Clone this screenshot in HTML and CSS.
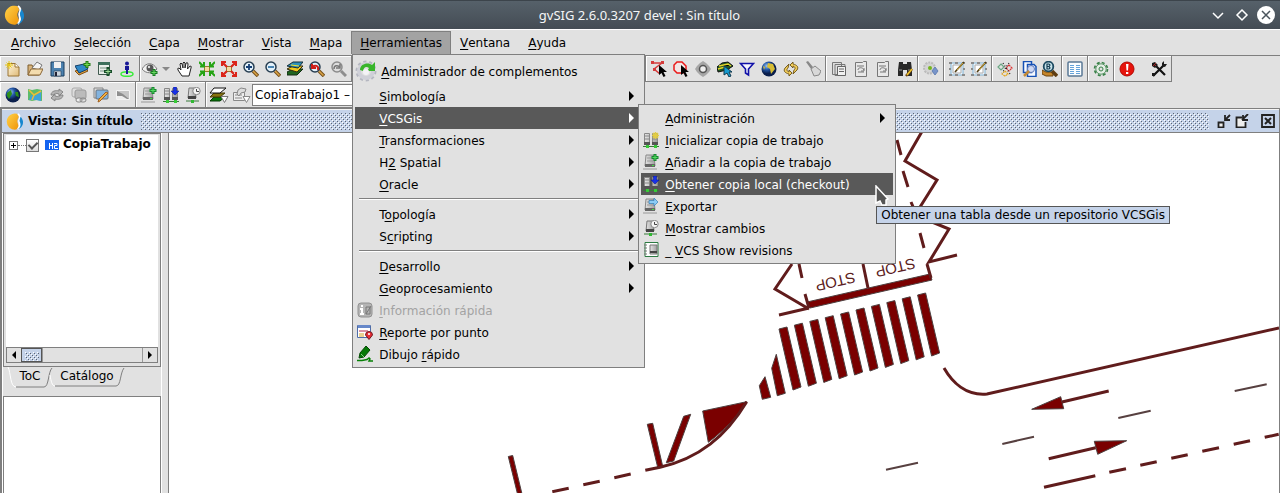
FILE: index.html
```html
<!DOCTYPE html>
<html lang="es">
<head>
<meta charset="utf-8">
<title>gvSIG 2.6.0.3207 devel : Sin título</title>
<link rel="stylesheet" href="styles.css">
</head>
<body>
<svg class="defs" aria-hidden="true">
  <defs>
    <pattern id="dots" width="4" height="4" patternUnits="userSpaceOnUse"><path d="M0 0h1v1H0zM2 2h1v1H2z" fill="#5b6472"/><path d="M1 1h1v1H1zM3 3h1v1H3z" fill="#fff"/></pattern>
    <linearGradient id="orange" x1="0" y1="0" x2="1" y2="1"><stop offset="0" stop-color="#ffd24a"/><stop offset="1" stop-color="#ee9408"/></linearGradient>
    <radialGradient id="globe" cx=".35" cy=".3"><stop offset="0" stop-color="#9ac4f0"/><stop offset=".5" stop-color="#2458a8"/><stop offset="1" stop-color="#0b1f4d"/></radialGradient>
    <linearGradient id="metal"><stop offset="0" stop-color="#e4e4e4"/><stop offset="1" stop-color="#a0a0a0"/></linearGradient>
    <linearGradient id="paper" x1="0" y1="0" x2="1" y2="1"><stop offset="0" stop-color="#fff6dc"/><stop offset="1" stop-color="#dfba78"/></linearGradient>
  </defs>
  <symbol id="logo" viewBox="0 0 20 20"><path d="M13 1a9.500 9.500 0 1 0-1 18.500c3-2 4-4 2-7-2-4 1-6 1-8 0-1-1-3-2-3.500z" fill="url(#orange)"/><path d="M14 1c3 2 3 4 1.500 7s3 6-1.500 11" fill="none" stroke="#fff" stroke-width="2"/><path d="M17 4c3 3 4 7 2 11-1 2-3 4-5 4 3-2 4-5 2.500-8S17 7 17 4z" fill="#1787cf"/></symbol>
  <symbol id="new" viewBox="0 0 16 16"><path d="M3 2.500h7l4 3.500v9H3z" fill="url(#paper)" stroke="#9a7535"/><path d="M10 2.500V6h4" fill="#fff" stroke="#9a7535"/><path d="M4 0v8M0 4h8M1.500 1.500l5 5M6.500 1.500l-5 5" stroke="#e8c711"/></symbol>
  <symbol id="open" viewBox="0 0 16 16"><path d="M1 14V4h4l1 2h6v8z" fill="#d8b47c" stroke="#7d5c2c"/><path d="M5 7l5-6 5 3-3 5z" fill="#f4f4f4" stroke="#777"/><path d="M1 14l3-6h12l-3 6z" fill="#f3dcae" stroke="#8a6635"/></symbol>
  <symbol id="save" viewBox="0 0 16 16"><path d="M2 1h13v14H2z" fill="#4c82b0" stroke="#1b3f60"/><path d="M5 1h7v6H5z" fill="#f1f1f1"/><path d="M5 10h7v5H5z" fill="#ccd6df" stroke="#253e55" stroke-width=".6"/><path d="M6 11h2v4H6z" fill="#223"/></symbol>
  <symbol id="addlayer" viewBox="0 0 16 16"><path d="M0 10l10-3 3 3-9 4z" fill="#e8a13c" stroke="#7f5014"/><path d="M0 5l9-2 4 5-9 4z" fill="#2f88c8" stroke="#123f68"/><path d="M12 0v7M8.500 3.500h7" stroke="#247c14" stroke-width="3"/><path d="M12 1v5M9.500 3.500h5" stroke="#78dc54"/></symbol>
  <symbol id="addtable" viewBox="0 0 16 16"><path d="M1.500 1.500h11v12h-11z" fill="#e8eee9" stroke="#405a4f"/><path d="M1 1h12v3H1z" fill="#3d6f5b"/><path d="M3 7h8M3 10h8" stroke="#769083"/><path d="M11 6v9M7 10.500h8" stroke="#174e2b" stroke-width="3"/><path d="M11 8v5M8.500 10.500h5" stroke="#9edb94"/></symbol>
  <symbol id="person" viewBox="0 0 16 16"><ellipse cx="8" cy="13" rx="6" ry="2.300" fill="none" stroke="#39ec39" stroke-width="1.500"/><circle cx="8" cy="2.500" r="2" fill="#171796"/><path d="M6 5h4v4H9v4H7V9H6z" fill="#171796"/></symbol>
  <symbol id="eye" viewBox="0 0 16 16"><path d="M0 8c4-7 11-7 15 0-4 5-11 5-15 0z" fill="#f2f2f2" stroke="#777"/><circle cx="8" cy="7" r="3.500" fill="#555"/><circle cx="7" cy="6" r="1.200" fill="#ddd"/><path d="M12 8v7M8.500 11.500h7" stroke="#187a22" stroke-width="3"/><path d="M12 9v5M9.500 11.500h5" stroke="#67da60"/></symbol>
  <symbol id="hand" viewBox="0 0 16 16"><path d="M5 15L1 9q-1-2 1-2l2 2-1-6q1-2 2 0l1 4V2q1-2 2 0v5l1-5q2-1 2 1l-.500 5L13 5q2 0 1 2l-2 8z" fill="#fff" stroke="#222"/></symbol>
  <symbol id="zoomin-ext" viewBox="0 0 16 16"><path d="M5.500 5.500h5v5h-5z" fill="#f6d9a0" stroke="#937a2f"/><path d="M0 1l4 4M16 1l-4 4M0 15l4-4M16 15l-4-4M1 5.500h4V1M15 5.500h-4V1M1 10.500h4V15M15 10.500h-4V15" stroke="#25a414" stroke-width="2" fill="none"/></symbol>
  <symbol id="zoomout-ext" viewBox="0 0 16 16"><path d="M5.500 5.500h5v5h-5z" fill="#f6d9a0" stroke="#937a2f"/><path d="M1 1l5 5M15 1l-5 5M1 15l5-5M15 15l-5-5M1 5V1h4M11 1h4v4M1 11v4h4M15 11v4h-4" stroke="#db2419" stroke-width="2.200" fill="none"/></symbol>
  <symbol id="lens" viewBox="0 0 16 16"><path d="M10 10l5 5" stroke="#744e18" stroke-width="3.500"/><path d="M10 10l4.500 4.500" stroke="#dda547" stroke-width="1.500"/><circle cx="6" cy="6" r="5" fill="#e3f1fa" stroke="#273e51" stroke-width="1.500"/></symbol>
  <symbol id="zoomin" viewBox="0 0 16 16"><use href="#lens"/><path d="M3 6h6M6 3v6" stroke="#153f76" stroke-width="1.800"/></symbol>
  <symbol id="zoomout" viewBox="0 0 16 16"><use href="#lens"/><path d="M3 6h6" stroke="#3878aa" stroke-width="1.800"/></symbol>
  <symbol id="layers" viewBox="0 0 16 16"><path d="M0 11l6-3h10l-6 6H0z" fill="#20641f" stroke="#132a13"/><path d="M0 8l6-3h10l-6 6z" fill="#f1c91d" stroke="#332c10"/><path d="M0 5l6-4h10l-5 6z" fill="#2d91ba" stroke="#152d36"/><path d="M4 4l8 1" stroke="#f1e22b"/></symbol>
  <symbol id="zoomprev" viewBox="0 0 16 16"><use href="#lens"/><path d="M9 9c1-5-3-5-6-3M3 3v4h4" fill="none" stroke="#cf1d17" stroke-width="2"/></symbol>
  <symbol id="zoomnext" viewBox="0 0 16 16"><path d="M10 10l5 5" stroke="#8e8e8e" stroke-width="3"/><circle cx="6" cy="6" r="5" fill="#ddd" stroke="#8b8b8b" stroke-width="1.500"/><path d="M3 8c0-4 3-4 6-2M9 3v4H5" fill="none" stroke="#777" stroke-width="1.500"/></symbol>
  <symbol id="cursor" viewBox="0 0 16 16"><path d="M8 4v10l2.500-2 2 4 2-1-2-4H16z" fill="#000"/></symbol>
  <symbol id="selpoly" viewBox="0 0 16 16"><path d="M1 2h11M11 2L3 8l6 5" fill="none" stroke="#d43b3b" stroke-width="1.500"/><path d="M0 0h3v3H0zM10 0h3v3h-3zM2 7h3v3H2z" fill="#d43b3b"/><use href="#cursor"/></symbol>
  <symbol id="selcirc" viewBox="0 0 16 16"><path d="M4 1h5l4 4v4l-3 3H4L1 9V4z" fill="#f2e5e5" stroke="#ea1818" stroke-width="1.500"/><use href="#cursor"/></symbol>
  <symbol id="buffer" viewBox="0 0 16 16"><path d="M8 0l3 2 3 3 2 3-2 3-3 3-3 2-3-2-3-3-2-3 2-3 3-3z" fill="#a6a6a6"/><circle cx="8" cy="8" r="3.500" fill="#eee" stroke="#555" stroke-width="1.500"/></symbol>
  <symbol id="sellayer" viewBox="0 0 16 16"><path d="M0 6l5-4 6-1 5 4-6 4-9 2z" fill="#1f5724" stroke="#111"/><path d="M2 5l9-2 3 2M1 8l7-2" stroke="#e4d52b" stroke-width="1.500"/><path d="M7 5v9l3-2 2 4 2-1-2-4h3z" fill="#159bd0" stroke="#12384d"/></symbol>
  <symbol id="filter" viewBox="0 0 16 16"><path d="M1.500 2.500h13L9.500 8v6L6.500 12V8z" fill="#f5f5ff" stroke="#1010a8" stroke-width="1.600"/></symbol>
  <symbol id="earth" viewBox="0 0 16 16"><circle cx="8" cy="8" r="7.500" fill="url(#globe)"/><path d="M7 2l5 1 2 5-4 5-1-5-3-2zM2 5l2 1-1 3z" fill="#d7bd35"/></symbol>
  <symbol id="earthg" viewBox="0 0 16 16"><circle cx="8" cy="8" r="7.500" fill="url(#globe)"/><path d="M2 6l4-3 1 4-3 5-2-3zM10 5l3 0 1 5-3-1z" fill="#2e8f1b"/></symbol>
  <symbol id="swap" viewBox="0 0 16 16"><path d="M6 3L2 7c-2 3 0 5 4 6v2l3-3-3-3v2c-2-1-3-2-1-4zM10 13l4-4c2-3 0-5-4-6V1L7 4l3 3V5c2 1 3 2 1 4z" fill="#f1cc5a" stroke="#6b5114" stroke-width=".9"/></symbol>
  <symbol id="broom" viewBox="0 0 16 16"><path d="M1 1l2-1 5 6-2 2z" fill="#888"/><path d="M6 8l4-3 6 5-2 4-5 1z" fill="#d8d8d8" stroke="#888"/></symbol>
  <symbol id="docs" viewBox="0 0 16 16"><path d="M1.500 1.500h9v12h-9zM4 3.500h10v11H4z" fill="#ddd" stroke="#777"/><path d="M6.500 5.500h8v9h-8zM8 8h5M8 10.500h5" fill="#f1f1f1" stroke="#666"/></symbol>
  <symbol id="doc" viewBox="0 0 16 16"><path d="M2.500 1.500h7l1-1h3v15h-11z" fill="#e8e8e8" stroke="#777"/><path d="M4 5h7M5 9c0-3 5-3 6 0M11 7v3H8M5 11h6" fill="none" stroke="#777"/></symbol>
  <symbol id="binoc" viewBox="0 0 16 16"><path d="M2 1h4v2h4V1h4l1 8v6h-5V9H6v6H1V9z" fill="#292929"/><path d="M2 9h3M11 9h3" stroke="#999"/><path d="M15 8l-6 7" stroke="#6a4212" stroke-width="2.500"/><path d="M15 8l-5 6" stroke="#f0c52c" stroke-width="1.500"/></symbol>
  <symbol id="geargray" viewBox="0 0 16 16"><circle cx="6.500" cy="7" r="5.500" fill="#d3d3d3" stroke="#bbb" stroke-width="2" stroke-dasharray="2 1"/><circle cx="7" cy="7" r="2" fill="#75b51f"/><path d="M12 6l3 4-3 4-3-4z" fill="#7894c9" stroke="#6682b5"/></symbol>
  <symbol id="editgeo" viewBox="0 0 16 16"><path d="M2 2h12v12H2z" fill="#eef5fb" stroke="#82b5d6"/><path d="M4 4h8v8H4z" fill="#fff" stroke="#aaa"/><path d="M0 1h3v2H0zM6 1h3v2H6zM13 1h3v2h-3zM0 13h3v2H0zM6 13h3v2H6zM13 13h3v2h-3zM0 7h2v2H0zM14 7h2v2h-2z" fill="#8b8b8b"/><path d="M15 1L6 11" stroke="#4d3a10" stroke-width="1.600"/><path d="M14 2L8 9" stroke="#d6af3a"/></symbol>
  <symbol id="diamonds" viewBox="0 0 16 16"><g fill="none" stroke-width="1.200"><path d="M4 3l3 3-3 3-3-3z" stroke="#6aa783"/><path d="M12 4l3 3-3 3-3-3z" stroke="#d33" stroke-dasharray="2 .6"/><path d="M8 10l3 3-3 2-3-2z" stroke="#e5a51d" stroke-dasharray="2 .6"/><path d="M6 2l7 11M12 2L5 12" stroke="#222" stroke-dasharray="1 2"/></g></symbol>
  <symbol id="searchdoc" viewBox="0 0 16 16"><path d="M1.500.500h8v11h-8zM5.500 3.500H12l2 2v10H5.500z" fill="#f7faff" stroke="#1550b5" stroke-width="1.500"/><circle cx="9" cy="8" r="3.500" fill="#cfd9f4" stroke="#5f79b8"/><path d="M7 10l-5 5" stroke="#c48b36" stroke-width="2.500"/></symbol>
  <symbol id="booksearch" viewBox="0 0 16 16"><path d="M0 9l4 2h7v4H4l-4-2z" fill="#c5852a" stroke="#6b430f"/><path d="M10 10l5 5" stroke="#5f3d12" stroke-width="3.500"/><circle cx="6.500" cy="5.500" r="4.800" fill="#c7e2ea" stroke="#1c4960" stroke-width="1.800"/><path d="M5 3h2l1 1-1 1.500L8 7 7 8H5zM5 5.500h2" fill="none" stroke="#173e54" stroke-width="1.200"/></symbol>
  <symbol id="list" viewBox="0 0 16 16"><rect x="1" y="1" width="14" height="14" rx="1" fill="#fafdff" stroke="#5a7895" stroke-width="1.500"/><path d="M3 4.500h4M3 6.500h4M3 8.500h4M3 10.500h4M3 12.500h4M9 4.500h4M9 6.500h4M9 8.500h4M9 10.500h4M9 12.500h4" stroke="#65a3da"/></symbol>
  <symbol id="gear" viewBox="0 0 16 16"><circle cx="8" cy="8" r="6.500" fill="none" stroke="#378046" stroke-width="1.600" stroke-dasharray="3 2.100"/><circle cx="8" cy="8" r="5.200" fill="#e5eee6" stroke="#378046" stroke-width=".8"/><circle cx="8" cy="8" r="2" fill="#e1e1e1" stroke="#378046"/></symbol>
  <symbol id="alert" viewBox="0 0 16 16"><circle cx="8" cy="8" r="7" fill="#e6140c" stroke="#b20802"/><path d="M7 3h2.500L9 9.500H7.500zM7 11h2.300v2H7z" fill="#fff"/></symbol>
  <symbol id="tools" viewBox="0 0 16 16"><path d="M4 4l10 10M13 4L2 15" stroke="#111" stroke-width="2.200"/><path d="M1 2l3-1 3 3-3 3-3-2zM11 2l2-2v3h3l-2 3-3-1zM1 12h3v3H1z" fill="#1a1a1a"/><path d="M3 3l2 2M5 2L2 5" stroke="#a22"/></symbol>
  <symbol id="mapico" viewBox="0 0 16 16"><path d="M1 2l4 1 5-1 5 1v11l-5-1-5 1-4-1z" fill="#5dbb6a"/><path d="M2 13l2-5 4 1 6-5v10l-5-1z" fill="#40a4d8"/><path d="M2 3l5 5 7-4M7 8l-2 5" fill="none" stroke="#ecbc3a" stroke-width="1.500"/></symbol>
  <symbol id="refresh" viewBox="0 0 16 16"><path d="M2 8c0-4 5-5 8-4V2l4 3-4 4V7C7 6 5 6 5 8zM14 8c0 4-5 5-8 4v2l-4-3 4-4v2c3 1 5 1 5-1z" fill="#b4b4b4" stroke="#808080" stroke-width=".9"/></symbol>
  <symbol id="copies" viewBox="0 0 16 16"><rect x="1" y="1" width="10" height="9" rx="2" fill="#ddd" stroke="#aaa"/><rect x="4" y="3" width="11" height="9" rx="2" fill="#bbb" stroke="#999"/><rect x="5" y="11" width="6" height="4" rx="2" fill="#eee" stroke="#888"/><rect x="9" y="11" width="6" height="4" rx="2" fill="none" stroke="#888"/></symbol>
  <symbol id="mapedit" viewBox="0 0 16 16"><path d="M1 1h9v10H1z" fill="#ddd" stroke="#858585"/><rect x="3" y="3" width="12" height="9" rx="1" fill="#82b3df" stroke="#66707a"/><path d="M15 6l-8 8-2 1 1-3 7-7z" fill="#eeb347" stroke="#a2601f"/></symbol>
  <symbol id="imgico" viewBox="0 0 16 16"><path d="M1.500 3.500h13v9h-13z" fill="#c6c6c6" stroke="#f4f4f4"/><path d="M2 4l6 3 6 5H2z" fill="#8e8e8e"/><path d="M2 9h5l5 3H2z" fill="#eee"/></symbol>
  <symbol id="server" viewBox="0 0 16 16"><path d="M3 1h8l1 11H2z" fill="url(#metal)" stroke="#888"/><path d="M4 4h6M4 7h6" stroke="#999"/><path d="M2 10h10v3H2z" fill="#666"/><path d="M9 11h2v1H9z" fill="#4d4"/><path d="M0 15h14" stroke="#999"/></symbol>
  <symbol id="servers" viewBox="0 0 16 16"><path d="M1.500 1.500h5v11h-5zM9.500 1.500h5v11h-5z" fill="url(#metal)" stroke="#888"/><path d="M2 4h4M2 7h4M10 4h4M10 7h4" stroke="#888"/><path d="M1 10h6v3H1zM9 10h6v3H9z" fill="#555"/><path d="M0 14.500h16" stroke="#397b3a"/><path d="M3 13h3v3H3zM11 13h3v3h-3z" fill="#36cb36"/></symbol>
  <symbol id="srv-add" viewBox="0 0 16 16"><use href="#server"/><path d="M12 0v7M8.500 3.500h7" stroke="#198a31" stroke-width="3"/><path d="M12 1v5M9.500 3.500h5" stroke="#54db61"/></symbol>
  <symbol id="srv-down" viewBox="0 0 16 16"><use href="#servers"/><path d="M10.500 0h3v4H16l-4 4-4-4h2.500z" fill="#1731e8" stroke="#06119a" stroke-width=".5"/></symbol>
  <symbol id="srv-init" viewBox="0 0 16 16"><use href="#servers"/><path d="M12.500 0v7M9 3.500h7M10 1l5 5M15 1l-5 5" stroke="#e2cd42" stroke-width="1.500"/></symbol>
  <symbol id="srv-exp" viewBox="0 0 16 16"><use href="#server"/><path d="M6 2.500h5V0l4 4-4 4V5.500H6z" fill="#8acbf5" stroke="#347eb7" stroke-width=".7"/></symbol>
  <symbol id="srv-time" viewBox="0 0 16 16"><path d="M4 1h6l1 10H3z" fill="url(#metal)" stroke="#777"/><path d="M3 9h8v3H3z" fill="#444"/><path d="M1 14h13" stroke="#397b3a"/><path d="M6 13h3v3H6z" fill="#31b934"/><circle cx="11.500" cy="4" r="3.700" fill="#f5f5f5" stroke="#888"/><path d="M11.500 2v2.500H14" fill="none" stroke="#444"/></symbol>
  <symbol id="notebook" viewBox="0 0 16 16"><path d="M2 .500h13v14H2z" fill="#fff" stroke="#2c7b42"/><path d="M1 3h3M1 6h3M1 9h3M1 12h3" stroke="#777"/><path d="M7 3h7v9H7z" fill="url(#metal)" stroke="#777"/><path d="M7 9h7v2H7z" fill="#444"/></symbol>
  <symbol id="layergo" viewBox="0 0 20 16"><path d="M1 14l4-4h11l-5 4z" fill="#087808" stroke="#033903"/><path d="M1 10l4-4h11l-5 4z" fill="#87730d" stroke="#443a08"/><path d="M1 6l4-5h12l-6 5z" fill="#fff" stroke="#111"/><path d="M12 9.500h7l-3.500 6z" fill="#fff" stroke="#777"/></symbol>
  <symbol id="propgo" viewBox="0 0 20 16"><path d="M2.500 5.500h11v8h-11zM4 8h7M4 11h7" fill="#eee" stroke="#888"/><path d="M6 7l1-4 3-2 5 1-1 3-4 1-2 3z" fill="#ddd" stroke="#888"/><path d="M12 9.500h7l-3.500 6z" fill="#fff" stroke="#888"/></symbol>
  <symbol id="addons" viewBox="0 0 22 22"><circle cx="11" cy="11" r="9" fill="none" stroke="#b4b6c0" stroke-width="3" stroke-dasharray="3 2.650"/><circle cx="11" cy="11" r="7" fill="none" stroke="#cfd0d8" stroke-width="4"/><path d="M5 10c0-7 9-8 12-5l3-3v9h-8l2-3c-3-2-5-1-6 3z" fill="#38b52b"/><circle cx="11" cy="12" r="3" fill="#f3f3f6"/></symbol>
  <symbol id="quickinfo" viewBox="0 0 16 16"><rect x="1" y="1" width="14" height="14" rx="3" fill="#b5b5b5" stroke="#929292"/><path d="M4 3h2v2H4zM3 6h3v5h1v2H3v-2h1V8H3z" fill="#fff"/><path d="M9 5h4v7H9zM9 12l5-8" fill="none" stroke="#777"/></symbol>
  <symbol id="report" viewBox="0 0 16 16"><path d="M.500 1.500h13v12H.500z" fill="#fff" stroke="#4f6da7"/><path d="M1 1h12v3H1z" fill="#6788c9"/><path d="M2 6h9v2H2z" fill="#d994a4"/><path d="M2 9h5v4H2z" fill="#ead291"/><path d="M12 15.500L8.500 11a3.500 3.500 0 1 1 7 0z" fill="#e62d35" stroke="#701c22"/><circle cx="12" cy="10" r="1" fill="#fff"/></symbol>
  <symbol id="marker" viewBox="0 0 16 16"><path d="M9 0l4 4-6 7-5 1 1-5z" fill="#077a07" stroke="#054a05"/><path d="M4 8l3 3" stroke="#8c8"/><path d="M0 14.500h5l5-1 2-1.500 1 1-1 2h4" fill="none" stroke="#078007" stroke-width="1.500"/></symbol>
</svg>

<header class="titlebar">
  <svg class="logo"><use href="#logo"/></svg>
  <h1 class="titlebar-text">gvSIG 2.6.0.3207 devel : Sin título</h1>
  <div class="window-buttons">
    <button aria-label="Minimizar"><svg viewBox="0 0 18 18"><path d="M4 7l5 5 5-5" fill="none" stroke="#fff" stroke-width="1.500"/></svg></button>
    <button aria-label="Maximizar"><svg viewBox="0 0 18 18"><path d="M9 4l5 5-5 5-5-5z" fill="none" stroke="#fff" stroke-width="1.500"/></svg></button>
    <button aria-label="Cerrar"><svg viewBox="0 0 18 18"><circle cx="9" cy="9" r="9" fill="#fff"/><path d="M5 5l8 8M13 5l-8 8" stroke="#4a545c" stroke-width="1.500"/></svg></button>
  </div>
</header>

<nav class="menubar">
  <div class="menubar-item"><button><u>A</u>rchivo</button></div>
  <div class="menubar-item"><button><u>S</u>elección</button></div>
  <div class="menubar-item"><button><u>C</u>apa</button></div>
  <div class="menubar-item"><button><u>M</u>ostrar</button></div>
  <div class="menubar-item"><button><u>V</u>ista</button></div>
  <div class="menubar-item"><button><u>M</u>apa</button></div>
  <div class="menubar-item open">
    <button aria-expanded="true"><u>H</u>erramientas</button>
    <div class="menu tools-menu" role="menu">
      <button class="row tall" role="menuitem"><svg class="large"><use href="#addons"/></svg><span><u>A</u>dministrador de complementos</span></button>
      <button class="row sub" role="menuitem"><i></i><span><u>S</u>imbología</span></button>
      <div class="submenu-host">
        <button class="row sub active" role="menuitem" aria-expanded="true"><i></i><span><u>V</u>CSGis</span></button>
        <div class="menu vcs-menu" role="menu">
          <button class="row sub" role="menuitem"><i></i><span><u>A</u>dministración</span></button>
          <button class="row" role="menuitem"><svg><use href="#srv-init"/></svg><span><u>I</u>nicializar copia de trabajo</span></button>
          <button class="row" role="menuitem"><svg><use href="#srv-add"/></svg><span><u>A</u>ñadir a la copia de trabajo</span></button>
          <div class="submenu-host">
            <button class="row active" role="menuitem" aria-describedby="tip"><svg><use href="#srv-down"/></svg><span><u>O</u>btener copia local (checkout)</span></button>
            <svg class="pointer" viewBox="0 0 14 22"><path d="M1 1v17l4-2 2 4h4V15l2-1z" fill="#555" stroke="#fff" stroke-width="1.500"/></svg>
            <div class="tooltip" id="tip" role="tooltip">Obtener una tabla desde un repositorio VCSGis</div>
          </div>
          <button class="row" role="menuitem"><svg><use href="#srv-exp"/></svg><span><u>E</u>xportar</span></button>
          <button class="row" role="menuitem"><svg><use href="#srv-time"/></svg><span><u>M</u>ostrar cambios</span></button>
          <button class="row" role="menuitem"><svg><use href="#notebook"/></svg><span>_ <u>V</u>CS Show revisions</span></button>
        </div>
      </div>
      <button class="row sub" role="menuitem"><i></i><span><u>T</u>ransformaciones</span></button>
      <button class="row sub" role="menuitem"><i></i><span>H<u>2</u> Spatial</span></button>
      <button class="row sub" role="menuitem"><i></i><span><u>O</u>racle</span></button>
      <hr>
      <button class="row sub" role="menuitem"><i></i><span>T<u>o</u>pología</span></button>
      <button class="row sub" role="menuitem"><i></i><span>S<u>c</u>ripting</span></button>
      <hr>
      <button class="row sub" role="menuitem"><i></i><span><u>D</u>esarrollo</span></button>
      <button class="row sub" role="menuitem"><i></i><span><u>G</u>eoprocesamiento</span></button>
      <button class="row" role="menuitem" disabled><svg><use href="#quickinfo"/></svg><span><u>I</u>nformación rápida</span></button>
      <button class="row" role="menuitem"><svg><use href="#report"/></svg><span><u>R</u>eporte por punto</span></button>
      <button class="row" role="menuitem"><svg><use href="#marker"/></svg><span>Dibujo <u>r</u>ápido</span></button>
    </div>
  </div>
  <div class="menubar-item"><button><u>V</u>entana</button></div>
  <div class="menubar-item"><button><u>A</u>yuda</button></div>
</nav>

<div class="toolbar">
  <div class="group"><button aria-label="Nuevo"><svg><use href="#new"/></svg></button><button aria-label="Abrir"><svg><use href="#open"/></svg></button><button aria-label="Guardar"><svg><use href="#save"/></svg></button></div>
  <div class="group"><button aria-label="Añadir capa"><svg><use href="#addlayer"/></svg></button><button aria-label="Añadir tabla"><svg><use href="#addtable"/></svg></button><button aria-label="Street view"><svg><use href="#person"/></svg></button></div>
  <div class="group"><button class="drop" aria-label="Visibilidad"><svg><use href="#eye"/></svg></button><button aria-label="Desplazar"><svg><use href="#hand"/></svg></button><button aria-label="Zoom más fijo"><svg><use href="#zoomin-ext"/></svg></button><button aria-label="Zoom menos fijo"><svg><use href="#zoomout-ext"/></svg></button><button aria-label="Acercar"><svg><use href="#zoomin"/></svg></button><button aria-label="Alejar"><svg><use href="#zoomout"/></svg></button><button aria-label="Zoom completo"><svg><use href="#layers"/></svg></button><button aria-label="Zoom previo"><svg><use href="#zoomprev"/></svg></button><button aria-label="Zoom siguiente"><svg><use href="#zoomnext"/></svg></button></div>
  <div class="group covered"></div>
  <div class="group"><button aria-label="Seleccionar por polígono"><svg><use href="#selpoly"/></svg></button><button aria-label="Seleccionar por círculo"><svg><use href="#selcirc"/></svg></button><button aria-label="Área de influencia"><svg><use href="#buffer"/></svg></button><button aria-label="Seleccionar por capa"><svg><use href="#sellayer"/></svg></button><button aria-label="Filtro"><svg><use href="#filter"/></svg></button><button aria-label="Seleccionar todo"><svg><use href="#earth"/></svg></button><button aria-label="Invertir selección"><svg><use href="#swap"/></svg></button><button aria-label="Limpiar selección"><svg><use href="#broom"/></svg></button></div>
  <div class="group"><button aria-label="Copiar"><svg><use href="#docs"/></svg></button><button aria-label="Documento"><svg><use href="#doc"/></svg></button><button aria-label="Actualizar documento"><svg><use href="#doc"/></svg></button><button aria-label="Buscar"><svg><use href="#binoc"/></svg></button></div>
  <div class="group"><button aria-label="Complemento"><svg><use href="#geargray"/></svg></button></div>
  <div class="group"><button aria-label="Editar geometría"><svg><use href="#editgeo"/></svg></button><button aria-label="Editar vértices"><svg><use href="#editgeo"/></svg></button></div>
  <div class="group"><button aria-label="Simbología"><svg><use href="#diamonds"/></svg></button></div>
  <div class="group narrow"><button aria-label="Buscar documento"><svg><use href="#searchdoc"/></svg></button><button aria-label="Buscar en catálogo"><svg><use href="#booksearch"/></svg></button></div>
  <div class="group"><button aria-label="Tabla"><svg><use href="#list"/></svg></button></div>
  <div class="group"><button aria-label="Preferencias"><svg><use href="#gear"/></svg></button></div>
  <div class="group spaced"><button aria-label="Avisos"><svg><use href="#alert"/></svg></button><button aria-label="Herramientas"><svg><use href="#tools"/></svg></button></div>
</div>
<div class="toolbar second">
  <div class="group"><button aria-label="Globo"><svg><use href="#earthg"/></svg></button><button aria-label="Mapa"><svg><use href="#mapico"/></svg></button><button aria-label="Refrescar"><svg><use href="#refresh"/></svg></button><button aria-label="Capas"><svg><use href="#copies"/></svg></button><button aria-label="Editar mapa"><svg><use href="#mapedit"/></svg></button><button aria-label="Imagen"><svg><use href="#imgico"/></svg></button></div>
  <div class="group"><button aria-label="Añadir a la copia"><svg><use href="#srv-add"/></svg></button><button aria-label="Obtener copia local"><svg><use href="#srv-down"/></svg></button><button aria-label="Cambios"><svg><use href="#srv-time"/></svg></button></div>
  <div class="group wide"><button aria-label="Capa activa"><svg><use href="#layergo"/></svg></button><button aria-label="Propiedades"><svg><use href="#propgo"/></svg></button><select aria-label="Copia de trabajo"><option>CopiaTrabajo1 – Copia</option></select></div>
</div>

<main class="frame">
  <div class="frame-title">
    <svg class="frame-logo"><use href="#logo"/></svg>
    <h2>Vista: Sin título</h2>
    <svg class="grip" aria-hidden="true"><rect width="100%" height="100%" fill="url(#dots)"/></svg>
    <div class="frame-buttons">
      <button aria-label="Iconizar"><svg viewBox="0 0 14 14"><path d="M1.500 8.500h5v5h-5z" fill="#eee" stroke="#222" stroke-width="1.800"/><path d="M13 1L8 6M8 1v5h5" fill="none" stroke="#222" stroke-width="1.800"/></svg></button>
      <button aria-label="Restaurar"><svg viewBox="0 0 14 14"><path d="M7 3.500H1.500v10h9V8" fill="#eee" stroke="#222" stroke-width="1.800"/><path d="M13 0L7 6M8 1v5h5" fill="none" stroke="#222" stroke-width="1.800"/></svg></button>
      <button class="frame-close" aria-label="Cerrar vista"><svg viewBox="0 0 14 14"><path d="M1 1h12v12H1z" fill="#c5d3e9" stroke="#222" stroke-width="1.800"/><path d="M4 4l6 6M10 4l-6 6" stroke="#222" stroke-width="2"/></svg></button>
    </div>
  </div>
  <div class="frame-body">
    <aside class="side">
      <section class="toc">
        <div class="tree">
          <button class="expander" aria-label="Expandir"><svg viewBox="0 0 7 7"><path d="M1 3.500h5M3.500 1v5" stroke="#000"/></svg></button><span class="link-line"></span>
          <input type="checkbox" id="layer" checked>
          <svg class="h2" viewBox="0 0 14 10"><rect width="14" height="10" fill="#1464f0"/><path d="M4.500 3v6M7.500 3v6M5 5.500h2M9 3.500h3v2H9.500v3H13" fill="none" stroke="#fff"/></svg>
          <label for="layer">CopiaTrabajo</label>
        </div>
        <div class="scroll">
          <button aria-label="Izquierda"><svg viewBox="0 0 6 10"><path d="M5 1v8L1 5z"/></svg></button>
          <svg class="thumb"><rect x="3" y="3" width="14" height="9" fill="url(#dots)"/></svg>
          <span class="track"></span>
          <button aria-label="Derecha"><svg viewBox="0 0 6 10"><path d="M1 1v8l4-4z"/></svg></button>
        </div>
      </section>
      <div class="tabs">
        <button class="tab"><svg viewBox="0 0 46 21"><path d="M1 0c3 6 2 20 8 20h28c5 0 4-15 8-19" fill="#e1e1e1"/><path d="M1 0c3 6 2 20 8 20" fill="none" stroke="#fff"/><path d="M9 20h28c5 0 4-15 8-19" fill="none" stroke="#7f7f7f"/></svg><span>ToC</span></button>
        <button class="tab second-tab"><svg viewBox="0 0 76 21"><path d="M1 8c1 6 2 11 5 11" fill="none" stroke="#fff"/><path d="M6 19h61c5 0 4-13 8-18" fill="none" stroke="#7f7f7f"/></svg><span>Catálogo</span></button>
      </div>
      <section class="overview"></section>
    </aside>
    <div class="splitter"></div>
    <section class="map" aria-label="Mapa">
      <svg class="drawing">
        <g transform="translate(-169 -133)">
          <g class="fill">
            <path d="M807 302l123-28 2 6-122 28z"/>
            <path id="stripe" d="M779 329l8-2 14 60-8 3z"/>
            <use href="#stripe" x="15.400" y="-3.800"/><use href="#stripe" x="30.800" y="-7.600"/><use href="#stripe" x="46.200" y="-11.300"/><use href="#stripe" x="61.600" y="-15"/><use href="#stripe" x="77" y="-19"/><use href="#stripe" x="92.400" y="-22.600"/><use href="#stripe" x="107.800" y="-26.400"/><use href="#stripe" x="123.200" y="-30.200"/><use href="#stripe" x="138.600" y="-34"/>
            <path d="M776.300 354.300l-4.600 14 5.600 27.400 8-2.400zM765 376.700l-5.700 9 3 13.600 8.400-2z"/>
            <path d="M1031.700 409.300l29-12.600 3 12zM1126.700 440.700l-32.400.600 3.400 13z"/>
            <path d="M508.300 456.500l4.400-1 9.300 38.500h-4.500zM647.300 424.300l5.400-1 10 43-5 1zM683.700 416.300l7-2-17 46.700-7.400 1.700z"/>
            <path d="M702.700 411l44-9.300c-10 16-23 29-38.400 40.600z"/>
          </g>
          <g class="line">
            <path d="M921.700 132L905 161l32 19-22 35 34 14-20 33 28-7M897 140l4 15M903 171l5 16M911 202l3 7M920 233l4 15M927 264l4 14"/>
            <path d="M792 264l-17 25 34 20M779 315l30-7M799 264l3 14M805 294l4 14M863 264l5 24"/>
            <path d="M944 368c8 14 22 28 43 26l292-66M1062 402l46.700-11M1048.700 458.700l47-11"/>
            <path d="M645.300 470.300l14.700-3c39-9 66-31 86.700-65.600"/>
          </g>
          <path class="line" d="M1044 487.300l51.300-11.600M1109.300 472.300l16.700-3.600M1140.300 465.300l16.400-3.600M1171.300 458.300l16.400-3.600M1202.300 451.300l16.700-3.600M1233.700 444.300l16.300-3.600M1264.700 437.300l14-3M552.300 491.700l16.400-3.400M583.300 484.700l16.400-3.400M614.300 477.700l16.400-3.700"/>
          <path class="thin" d="M1234.700 391l32-6.700M1118.300 418l32.400-7.300M1002.300 444l31.700-7.300M886 469.700l32-7"/>
          <text class="road-text" transform="translate(854 272) rotate(167)">STOP</text>
          <text class="road-text" transform="translate(914 258) rotate(167)">STOP</text>
        </g>
      </svg>
    </section>
  </div>
</main>
</body>
</html>
```

FILE: styles.css
```css
* { box-sizing: border-box; }

body {
  margin: 0;
  height: 100vh;
  display: flex;
  flex-direction: column;
  overflow: hidden;
  background: #e1e1e1;
  color: #000;
  font: 12px/16px "DejaVu Sans", sans-serif;
}

button {
  margin: 0;
  padding: 0;
  border: 0;
  background: none;
  color: inherit;
  font: inherit;
  display: flex;
  align-items: center;
  justify-content: center;
}

svg { display: block; flex: none; }
.defs { position: absolute; width: 0; height: 0; }
u { text-underline-offset: 2px; text-decoration-skip-ink: none; }

/* Window title */
.titlebar {
  height: 29px;
  flex: none;
  display: grid;
  grid-template-columns: 1fr auto 1fr;
  align-items: center;
  padding: 0 5px 0 4px;
  background: linear-gradient(#56616a, #444c54);
  border-top: 1px solid #3c444b;
}
.logo { width: 20px; height: 20px; }
.titlebar-text { margin: 0; font: 13px/18px "Noto Sans", sans-serif; color: #f4f6f7; }
.window-buttons { display: flex; gap: 6px; justify-content: flex-end; }
.window-buttons svg { width: 18px; height: 18px; }

/* Menu bar */
.menubar {
  height: 27px;
  flex: none;
  display: flex;
  padding: 1px 0 1px 2px;
  border-top: 1px solid #fff;
  border-bottom: 1px solid #7f7f7f;
}
.menubar-item { position: relative; display: flex; }
.menubar-item > button { padding: 0 9px; }
.menubar-item.open > button { background: #a3a3a3; border: 1px solid #7f7f7f; border-bottom: 0; padding: 0 8px; }

.menu {
  position: absolute;
  z-index: 5;
  padding: 2px;
  background: #e1e1e1;
  border: 1px solid #7f7f7f;
}
.tools-menu { top: 23px; left: 1px; width: 293px; }
.vcs-menu { top: -3px; left: 283px; width: 258px; }
.submenu-host { position: relative; }

.row {
  width: 100%;
  height: 22px;
  justify-content: flex-start;
  gap: 6px;
  padding: 0 8px 0 2px;
  white-space: nowrap;
}
.row svg, .row i { width: 16px; height: 16px; flex: none; }
.row span { padding-top: 2px; }
.row svg.large { width: 22px; height: 22px; }
.tools-menu > .tall { height: 28px; gap: 4px; padding-left: 0; }
.row.active { background: #595959; color: #fff; }
.row:disabled { color: #a3a3a3; }
.sub::after {
  content: "";
  margin-left: auto;
  border: solid transparent;
  border-width: 5px 0 5px 5px;
  border-left-color: currentColor;
}
.menu hr {
  height: 2px;
  margin: 3px 0 3px 4px;
  border: 0;
  background: linear-gradient(#7f7f7f 50%, #fff 50%);
}

.pointer { position: absolute; top: 12px; left: 234px; width: 14px; height: 22px; z-index: 7; }
.tooltip {
  position: absolute;
  z-index: 6;
  top: 33px;
  left: 235px;
  padding: 0 4px;
  background: #c5d3e9;
  border: 1px solid #555;
  white-space: nowrap;
}

/* Toolbars */
.toolbar { display: flex; flex: none; height: 26px; }
.group {
  display: flex;
  flex: none;
  padding: 0 1px 0 2px;
  border: 1px solid #7f7f7f;
  border-width: 0 1px 1px 0;
  box-shadow: inset 1px 1px #fff;
}
.group button { width: 22px; }
.group svg { width: 16px; height: 16px; }
.group .drop { width: 32px; justify-content: flex-start; gap: 4px; }
.drop::after { content: ""; border: solid transparent; border-width: 4px 4px 0; border-top-color: #888; }
.group.covered { width: 294px; }
.group.narrow button { width: 20px; }
.group.spaced { gap: 10px; }
.group.wide svg { width: 20px; }
.group select {
  width: 200px;
  margin: 2px 0 1px;
  padding: 0 2px;
  border: 1px solid #7f7f7f;
  border-radius: 0;
  background: #fff;
  color: #000;
  font: inherit;
  appearance: none;
}

/* Document window */
.frame {
  flex: 1;
  min-height: 0;
  display: flex;
  flex-direction: column;
  border: solid #7f7f7f;
  border-width: 1px 1px 0 2px;
}
.frame-title {
  height: 24px;
  flex: none;
  display: flex;
  align-items: center;
  padding: 0 4px;
  background: #c5d3e9;
  border-top: 1px solid #f4f4f4;
  border-bottom: 1px solid #7f7f7f;
}
.frame-logo { width: 17px; height: 17px; }
.frame-title h2 { margin: 0 8px 0 5px; font: bold 12px/16px "DejaVu Sans", sans-serif; }
.grip { flex: 1; min-width: 0; width: 0; height: 17px; }
.frame-buttons { display: flex; gap: 4px; margin-left: 8px; }
.frame-buttons svg { width: 14px; height: 14px; }
.frame-close { margin-left: 8px; }
.frame-body { flex: 1; min-height: 0; display: flex; border-left: 1px solid #fff; }

.side { width: 158px; flex: none; display: flex; flex-direction: column; }
.toc {
  height: 234px;
  flex: none;
  display: flex;
  flex-direction: column;
  padding: 1px 2px 3px 2px;
  border: 1px solid #7f7f7f;
}
.tree {
  flex: 1;
  display: flex;
  align-items: flex-start;
  overflow: hidden;
  padding: 1px 0 0 3px;
  background: #fff;
}
.expander { width: 9px; height: 9px; margin-top: 5px; border: 1px solid #777; }
.expander svg { width: 7px; height: 7px; }
.link-line { width: 8px; margin: 9px 0 0; border-top: 1px dotted #777; }
.tree input {
  appearance: none;
  width: 13px;
  height: 13px;
  margin: 3px 6px 0 0;
  border: 1px solid #777;
  background: linear-gradient(#fff, #ddd);
  display: grid;
  place-items: center;
}
.tree input:checked::after {
  content: "";
  width: 4px;
  height: 7px;
  margin-bottom: 2px;
  border: solid #555;
  border-width: 0 2px 2px 0;
  transform: rotate(45deg);
}
.h2 { width: 14px; height: 10px; margin: 4px 4px 0 0; }
.tree label { font-weight: bold; }

.scroll { display: flex; height: 16px; border: 1px solid #7f7f7f; }
.scroll button { width: 14px; }
.scroll button svg { width: 6px; height: 10px; }
.scroll .thumb { width: 21px; height: 14px; background: #c5d3e9; border: 1px solid #555; }
.track { flex: 1; border: solid #999; border-width: 0 1px; }

.tabs { display: flex; height: 24px; flex: none; padding-left: 4px; }
.tab { display: grid; place-items: start center; height: 21px; width: 46px; }
.tab > * { grid-area: 1 / 1; }
.tab svg { width: 100%; height: 21px; }
.tab span { padding-top: 1px; }
.second-tab { width: 76px; margin-left: -4px; }

.overview { flex: 1; border: 1px solid #7f7f7f; border-bottom: 0; background: #fff; margin-top: 5px; }
.splitter { width: 7px; flex: none; border-left: 1px solid #fff; }
.map {
  flex: 1;
  min-width: 0;
  border-left: 1px solid #7f7f7f;
  background: #fff;
}
.drawing { width: 100%; height: 100%; }
.fill { fill: #7a0000; stroke: #4d4040; }
.line { fill: none; stroke: #601c1c; stroke-width: 3; }
.thin { fill: none; stroke: #574040; stroke-width: 2; }
.road-text { font: 15px "Liberation Sans Narrow", "Liberation Sans", sans-serif; fill: #5b2020; }
```
